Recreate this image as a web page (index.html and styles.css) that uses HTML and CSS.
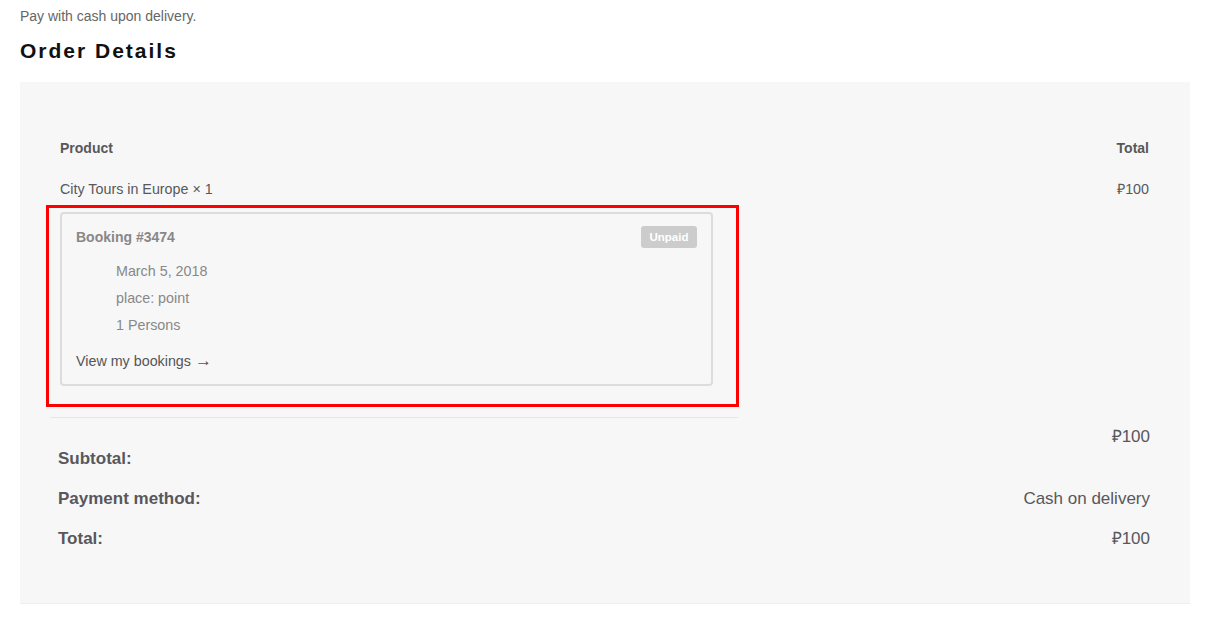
FILE: index.html
```html
<!DOCTYPE html>
<html>
<head>
<meta charset="utf-8">
<link rel="stylesheet" href="styles.css">
</head>
<body>
<p class="note">Pay with cash upon delivery.</p>
<h2 class="title">Order Details</h2>
<section class="panel">
  <div class="head-row">
    <span>Product</span>
    <span>Total</span>
  </div>
  <div class="item-row">
    <span>City Tours in Europe × 1</span>
    <span>₽100</span>
  </div>
  <div class="highlight">
    <div class="booking">
      <div class="booking-head">
        <span class="booking-id">Booking #3474</span>
        <span class="badge">Unpaid</span>
      </div>
      <ul class="booking-meta">
        <li>March 5, 2018</li>
        <li>place: point</li>
        <li>1 Persons</li>
      </ul>
      <a class="view-link">View my bookings <span class="arrow">→</span></a>
    </div>
  </div>
  <div class="separator"></div>
  <div class="sum-row subtotal">
    <span class="label">Subtotal:</span>
    <span class="value">₽100</span>
  </div>
  <div class="sum-row">
    <span class="label">Payment method:</span>
    <span class="value">Cash on delivery</span>
  </div>
  <div class="sum-row">
    <span class="label">Total:</span>
    <span class="value">₽100</span>
  </div>
</section>
</body>
</html>
```
FILE: styles.css
```css
html, body {
  margin: 0;
  padding: 0;
  background: #fff;
}
body {
  font-family: "Liberation Sans", Arial, sans-serif;
  padding: 0 31px 0 20px;
}
.note {
  margin: 6px 0 0;
  font-size: 14px;
  line-height: 20px;
  color: #666;
}
.title {
  margin: 13px 0 0;
  font-size: 21px;
  line-height: 24px;
  font-weight: bold;
  letter-spacing: 2px;
  color: #111;
}
.panel {
  margin-top: 19px;
  width: 1170px;
  box-sizing: border-box;
  background: #f7f7f7;
  border-bottom: 1px solid #efefef;
  padding: 56px 40px 54px 40px;
  color: #58585c;
}
.head-row {
  display: flex;
  justify-content: space-between;
  font-size: 14px;
  font-weight: bold;
  line-height: 20px;
  margin: 0 1px 21px 0;
}
.item-row {
  display: flex;
  justify-content: space-between;
  font-size: 14.3px;
  line-height: 20px;
  margin-right: 1px;
}
.highlight {
  margin: 6px 0 0 -14px;
  width: 693px;
  box-sizing: border-box;
  border: 3px solid #ff0000;
  padding: 4px 23px 18px 11px;
}
.booking {
  border: 2px solid #dcdcdc;
  border-radius: 4px;
  padding: 12px 14px 13px 14px;
}
.booking-head {
  display: flex;
  justify-content: space-between;
  align-items: center;
  height: 22px;
}
.booking-id {
  font-size: 14px;
  font-weight: bold;
  color: #888;
}
.badge {
  background: #cccccc;
  color: #fff;
  font-size: 11.5px;
  font-weight: bold;
  line-height: 22px;
  width: 56px;
  text-align: center;
  border-radius: 3px;
}
.booking-meta {
  list-style: none;
  margin: 10px 0 0;
  padding: 0 0 0 40px;
  font-size: 14.3px;
  line-height: 27px;
  color: #888;
}
.view-link {
  display: block;
  margin-top: 12px;
  font-size: 14.3px;
  line-height: 20px;
  color: #555;
}
.arrow {
  font-size: 17px;
  line-height: 1;
}
.separator {
  margin: 10px 0 0 -10px;
  width: 688px;
  height: 1px;
  background: #e6e6e6;
}
.sum-row {
  display: flex;
  justify-content: space-between;
  align-items: flex-start;
  font-size: 17px;
  line-height: 20px;
  margin-top: 20px;
}
.sum-row .label {
  font-weight: bold;
  margin-left: -2px;
}
.sum-row.subtotal {
  margin-top: 9px;
}
.sum-row.subtotal .label {
  padding-top: 22px;
}
```
